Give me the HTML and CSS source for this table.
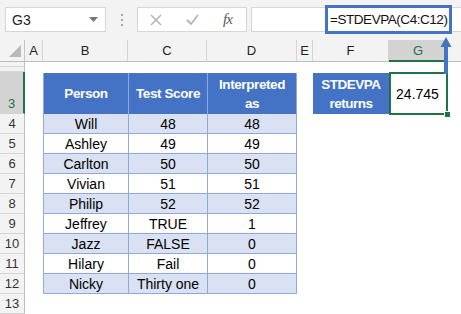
FILE: index.html
```html
<!DOCTYPE html>
<html lang="en">

<head>
    <meta charset="UTF-8" />
    <title>STDEVPA</title>
    <link rel="stylesheet" href="styles.css">
</head>

<body>
    <div class="toolbar">
        <div class="namebox">
            <span>G3</span>
            <svg width="9" height="5" viewBox="0 0 9 5"><path d="M0 0h9L4.5 5z" fill="#777" /></svg>
        </div>
        <svg class="grip" width="3" height="12" viewBox="0 0 3 12">
            <rect x="0" y="0" width="2" height="2" fill="#a6a6a6" />
            <rect x="0" y="5" width="2" height="2" fill="#a6a6a6" />
            <rect x="0" y="10" width="2" height="2" fill="#a6a6a6" />
        </svg>
        <div class="buttons">
            <svg width="12" height="12" viewBox="0 0 12 12"><path d="M1 1l10 10M11 1L1 11" stroke="#b4b4b4" stroke-width="1.6" /></svg>
            <svg width="13" height="11" viewBox="0 0 13 11"><path d="M1 6l4 4L12 1" stroke="#b4b4b4" stroke-width="1.8" fill="none" /></svg>
            <span class="fx">fx</span>
        </div>
        <div class="formula">
            <span class="formula-text">=STDEVPA(C4:C12)</span>
        </div>
    </div>

    <div class="sheet">
        <div class="corner"><svg width="12" height="12" viewBox="0 0 12 12"><path d="M12 0v12H0z" fill="#b9b9b9" /></svg></div>
        <div class="colhead">A</div>
        <div class="colhead">B</div>
        <div class="colhead">C</div>
        <div class="colhead">D</div>
        <div class="colhead">E</div>
        <div class="colhead">F</div>
        <div class="colhead active">G</div>
        <div class="colhead blank"></div>

        <div class="rowhead r1"></div>
        <div class="rowhead r2"></div>
        <div class="rowhead r3 active">3</div>
        <div class="rowhead r4">4</div>
        <div class="rowhead r5">5</div>
        <div class="rowhead r6">6</div>
        <div class="rowhead r7">7</div>
        <div class="rowhead r8">8</div>
        <div class="rowhead r9">9</div>
        <div class="rowhead r10">10</div>
        <div class="rowhead r11">11</div>
        <div class="rowhead r12">12</div>
        <div class="rowhead r13">13</div>

        <div class="data">
            <div class="th">Person</div>
            <div class="th">Test Score</div>
            <div class="th">Interpreted<br>as</div>

            <div class="td band">Will</div><div class="td band">48</div><div class="td band">48</div>
            <div class="td">Ashley</div><div class="td">49</div><div class="td">49</div>
            <div class="td band">Carlton</div><div class="td band">50</div><div class="td band">50</div>
            <div class="td">Vivian</div><div class="td">51</div><div class="td">51</div>
            <div class="td band">Philip</div><div class="td band">52</div><div class="td band">52</div>
            <div class="td">Jeffrey</div><div class="td">TRUE</div><div class="td">1</div>
            <div class="td band">Jazz</div><div class="td band">FALSE</div><div class="td band">0</div>
            <div class="td">Hilary</div><div class="td">Fail</div><div class="td">0</div>
            <div class="td band">Nicky</div><div class="td band">Thirty one</div><div class="td band">0</div>
        </div>

        <div class="label">STDEVPA<br>returns</div>
        <div class="result">24.745<span class="handle"></span></div>
    </div>

    <!-- arrow from the formula bar down to the selected cell -->
    <svg class="arrow" width="14" height="40" viewBox="0 0 14 40">
        <path d="M7 3L1.5 13h11z" fill="#4472c4" />
        <rect x="5" y="12" width="4" height="28" fill="#4472c4" />
    </svg>
</body>

</html>
```

FILE: styles.css
```css
* {
    box-sizing: border-box;
}

body {
    margin: 0;
    width: 461px;
    height: 314px;
    overflow: hidden;
    position: relative;
    font-family: "Liberation Sans", Arial, sans-serif;
    background: #fff;
    color: #000;
}

/* formula bar */

.toolbar {
    height: 40px;
    background: #f3f3f3;
    display: flex;
    align-items: flex-start;
    padding: 7px 0 0 5px;
}

.namebox {
    width: 101px;
    height: 25px;
    background: #fff;
    border: 1px solid #d6d6d6;
    display: flex;
    align-items: center;
    justify-content: space-between;
    padding: 0 7px 0 6px;
    font-size: 14px;
    color: #222;
}

.grip {
    margin: 7px 13px 0 15px;
}

.buttons {
    width: 110px;
    height: 25px;
    background: #fff;
    border: 1px solid #d6d6d6;
    display: flex;
    align-items: center;
    padding: 0 0 0 12px;
}

.buttons svg:first-child {
    margin-right: 24px;
}

.buttons svg:nth-child(2) {
    margin-right: 24px;
}

.fx {
    font-family: "Liberation Serif", "Times New Roman", serif;
    font-style: italic;
    font-size: 15px;
    color: #555;
    letter-spacing: -1px;
}

.formula {
    flex: 1;
    margin-left: 4px;
    height: 25px;
    background: #fff;
    border: 1px solid #d6d6d6;
    border-right: none;
    display: flex;
    align-items: center;
    justify-content: flex-end;
    padding-right: 9px;
}

.formula-text {
    height: 29px;
    width: 127px;
    border: 3px solid #4472c4;
    display: flex;
    align-items: center;
    padding-left: 2px;
    font-size: 13.5px;
    letter-spacing: -0.45px;
    color: #111;
}

/* worksheet */

.sheet {
    display: grid;
    grid-template-columns: 25px 18px 85px 79px 90px 16px 76px 59px 1fr;
    grid-template-rows: 22px 5px 5px 42px repeat(10, 20px);
    background: #fff;
}

.corner {
    background: #f3f3f3;
    border-right: 1px solid #c6c6c6;
    border-bottom: 1px solid #bdbdbd;
    display: flex;
    align-items: flex-end;
    justify-content: flex-end;
    padding: 0 3px 4px 0;
}

.colhead {
    background: #f3f3f3;
    border-right: 1px solid #d4d4d4;
    border-bottom: 1px solid #bdbdbd;
    display: flex;
    align-items: center;
    justify-content: center;
    font-size: 13px;
    color: #222;
}

.colhead.blank {
    border-right: none;
}

.colhead.active {
    background: #d3d3d3;
    color: #217346;
    border-bottom: 2px solid #217346;
}

.rowhead {
    grid-column: 1;
    background: #f3f3f3;
    border-right: 1px solid #bdbdbd;
    border-bottom: 1px solid #d4d4d4;
    display: flex;
    align-items: center;
    justify-content: center;
    font-size: 13px;
    color: #333;
}

.rowhead.r3 {
    align-items: flex-end;
    padding-bottom: 2px;
}

.rowhead.active {
    background: #d3d3d3;
    color: #217346;
    border-right: 2px solid #217346;
}

/* data table B3:D12 */

.data {
    grid-column: 3 / 6;
    grid-row: 4 / 14;
    margin-top: 1px;
    display: grid;
    grid-template-columns: 85px 79px 89px;
    grid-template-rows: 41px repeat(9, 20px);
    border-left: 1px solid #8ea9db;
}

.th {
    background: #4472c4;
    color: #fff;
    font-weight: bold;
    font-size: 13.5px;
    letter-spacing: -0.4px;
    line-height: 19px;
    border-right: 1px solid #8ea9db;
    display: flex;
    align-items: center;
    justify-content: center;
    text-align: center;
}

.td {
    font-size: 14px;
    border-right: 1px solid #8ea9db;
    border-bottom: 1px solid #8ea9db;
    display: flex;
    align-items: center;
    justify-content: center;
    padding-top: 1px;
}

.td.band {
    background: #d9e1f2;
}

.label {
    grid-column: 7;
    grid-row: 4;
    margin-top: 1px;
    background: #4472c4;
    color: #fff;
    font-weight: bold;
    font-size: 13.5px;
    letter-spacing: -0.5px;
    line-height: 19px;
    display: flex;
    align-items: center;
    justify-content: center;
    text-align: center;
}

.result {
    grid-column: 8;
    grid-row: 4;
    height: 43px;
    border: 2px solid #217346;
    position: relative;
    display: flex;
    align-items: center;
    justify-content: center;
    font-size: 14px;
    padding-right: 2px;
}

.handle {
    position: absolute;
    right: -5px;
    bottom: -5px;
    width: 7px;
    height: 7px;
    background: #217346;
    border: 1px solid #fff;
}

.arrow {
    position: absolute;
    left: 439px;
    top: 34px;
}
```
